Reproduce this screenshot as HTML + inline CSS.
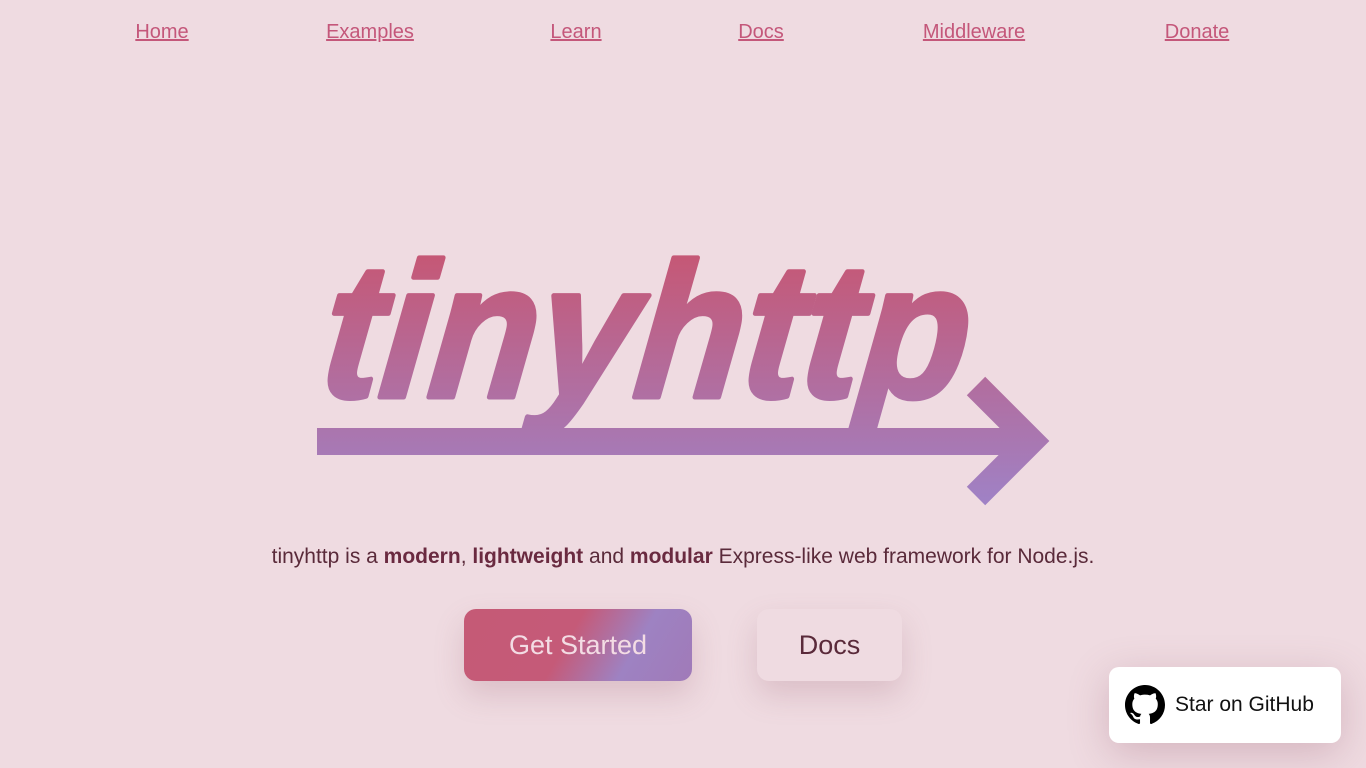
<!DOCTYPE html>
<html><head><meta charset="utf-8"><style>
html,body{margin:0;padding:0;background:#efdbe1;width:1366px;height:768px;overflow:hidden;font-family:"Liberation Sans",sans-serif}
nav a{position:absolute;top:21px;font-size:20px;color:#c4577a;text-decoration:underline;transform:translateX(-50%)}
p.t{position:absolute;top:545px;left:0;width:1366px;text-align:center;margin:0;font-size:21px;color:#5a2a3a}
p.t b{color:#6a2a40}
.btn{position:absolute;top:609px;height:72px;border-radius:12px;display:flex;align-items:center;justify-content:center;font-size:27px;box-shadow:0 14px 30px rgba(150,90,110,0.22)}
.gs{left:464px;width:228px;color:#f3dce4;background:linear-gradient(120deg,#c55a76 0%,#c55a78 45%,#9e82c2 72%,#a07ab8 100%)}
.dc{left:757px;width:145px;color:#5a2a3a;background:#efdbe1}
.gh{position:absolute;left:1109px;top:667px;width:232px;height:76px;background:#fff;border-radius:10px;box-shadow:0 10px 40px rgba(150,90,110,0.3);display:flex;align-items:center;font-size:21px;color:#111}
</style></head><body>
<nav>
<a style="left:162px">Home</a><a style="left:370px">Examples</a><a style="left:576px">Learn</a><a style="left:761px">Docs</a><a style="left:974px">Middleware</a><a style="left:1197px">Donate</a>
</nav>
<svg width="1366" height="768" style="position:absolute;left:0;top:0">
<defs><linearGradient id="g" x1="0" y1="245" x2="0" y2="505" gradientUnits="userSpaceOnUse"><stop offset="0" stop-color="#c75672"/><stop offset="1" stop-color="#9f82c6"/></linearGradient></defs>
<g transform="translate(0,397) skewX(-6) translate(0,-397)">
<text x="318" y="397" font-family="Liberation Sans" font-weight="bold" font-style="italic" font-size="192" fill="url(#g)" stroke="url(#g)" stroke-width="5" stroke-linejoin="round" textLength="646" lengthAdjust="spacingAndGlyphs">tinyhttp</text>
</g>
<rect x="317" y="428" width="700" height="27" fill="url(#g)"/>
<path d="M976 386 L1031 441 L976 496" fill="none" stroke="url(#g)" stroke-width="26" stroke-linejoin="miter"/>
</svg>
<p class="t">tinyhttp is a <b>modern</b>, <b>lightweight</b> and <b>modular</b> Express-like web framework for Node.js.</p>
<div class="btn gs">Get Started</div>
<div class="btn dc">Docs</div>
<div class="gh"><svg width="40" height="40" viewBox="0 0 16 16" style="margin:0 10px 0 16px"><path fill="#000" d="M8 0C3.580 0 0 3.580 0 8c0 3.54 2.29 6.53 5.47 7.59.4.07.55-.17.55-.38 0-.19-.01-.82-.01-1.490-2.01.37-2.53-.49-2.69-.94-.09-.23-.48-.94-.82-1.130-.28-.15-.68-.52-.01-.53.63-.01 1.080.58 1.230.82.72 1.210 1.870.87 2.330.66.07-.52.28-.87.51-1.070-1.780-.2-3.640-.89-3.640-3.950 0-.87.31-1.590.82-2.150-.08-.2-.36-1.020.08-2.120 0 0 .67-.21 2.2.82.64-.18 1.320-.27 2-.27.68 0 1.360.09 2 .27 1.530-1.040 2.2-.82 2.2-.82.44 1.1.16 1.920.08 2.120.51.56.82 1.270.82 2.150 0 3.070-1.870 3.750-3.650 3.950.29.25.54.73.54 1.480 0 1.070-.01 1.930-.01 2.2 0 .21.15.46.55.38A8.013 8.013 0 0016 8c0-4.420-3.580-8-8-8z"/></svg>Star on GitHub</div>
</body></html>
